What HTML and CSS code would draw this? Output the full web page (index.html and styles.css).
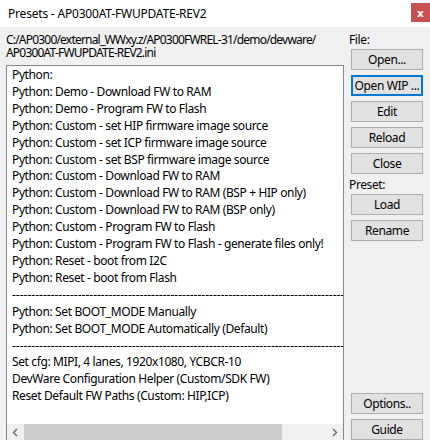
FILE: index.html
```html
<!DOCTYPE html>
<html lang="en">
<head>
    <meta charset="UTF-8">
    <title>Presets</title>
    <link rel="stylesheet" href="styles.css">
</head>
<body>
    <div class="window">
        <div class="titlebar">
            <span class="title">Presets - AP0300AT-FWUPDATE-REV2</span>
            <span class="close-x">x</span>
        </div>
        <div class="client">
            <div class="left">
                <div class="path">C:/AP0300/external_WWxy.z/AP0300FWREL-31/demo/devware/<br>AP0300AT-FWUPDATE-REV2.ini</div>
                <div class="listbox">
                    <div class="items">
                        <div class="item">Python:</div>
                        <div class="item">Python: Demo - Download FW to RAM</div>
                        <div class="item">Python: Demo - Program FW to Flash</div>
                        <div class="item">Python: Custom - set HIP firmware image source</div>
                        <div class="item">Python: Custom - set ICP firmware image source</div>
                        <div class="item">Python: Custom - set BSP firmware image source</div>
                        <div class="item">Python: Custom - Download FW to RAM</div>
                        <div class="item">Python: Custom - Download FW to RAM (BSP + HIP only)</div>
                        <div class="item">Python: Custom - Download FW to RAM (BSP only)</div>
                        <div class="item">Python: Custom - Program FW to Flash</div>
                        <div class="item">Python: Custom - Program FW to Flash - generate files only!</div>
                        <div class="item">Python: Reset - boot from I2C</div>
                        <div class="item">Python: Reset - boot from Flash</div>
                        <div class="item sep">----------------------------------------------------------------------------------------</div>
                        <div class="item">Python: Set BOOT_MODE Manually</div>
                        <div class="item">Python: Set BOOT_MODE Automatically (Default)</div>
                        <div class="item sep">----------------------------------------------------------------------------------------</div>
                        <div class="item">Set cfg: MIPI, 4 lanes, 1920x1080, YCBCR-10</div>
                        <div class="item">DevWare Configuration Helper (Custom/SDK FW)</div>
                        <div class="item">Reset Default FW Paths (Custom: HIP,ICP)</div>
                    </div>
                    <div class="hscroll">
                        <span class="arrow">
                            <svg width="7" height="9" viewBox="0 0 7 9"><path d="M5 1 L1.5 4.5 L5 8" fill="none" stroke="#606060" stroke-width="1.3"/></svg>
                        </span>
                        <span class="thumb"></span>
                        <span class="track"></span>
                        <span class="arrow">
                            <svg width="7" height="9" viewBox="0 0 7 9"><path d="M2 1 L5.5 4.5 L2 8" fill="none" stroke="#606060" stroke-width="1.3"/></svg>
                        </span>
                    </div>
                </div>
            </div>
            <div class="right">
                <div class="label">File:</div>
                <div class="btn first">Open...</div>
                <div class="btn focused">Open WIP ...</div>
                <div class="btn">Edit</div>
                <div class="btn">Reload</div>
                <div class="btn">Close</div>
                <div class="label preset">Preset:</div>
                <div class="btn first">Load</div>
                <div class="btn">Rename</div>
                <div class="btn bottom">Options..</div>
                <div class="btn">Guide</div>
            </div>
        </div>
    </div>
</body>
</html>
```

FILE: styles.css
```css
body {
    margin: 0;
    font-family: "Noto Sans", Arial, sans-serif;
    font-size: 12px;
    letter-spacing: -0.38px;
    color: #000;
    background: #f0f0f0;
}
.window {
    width: 430px;
    height: 440px;
    overflow: hidden;
    background: #f0f0f0;
}
.titlebar {
    height: 27px;
    background: #fff;
    display: flex;
    align-items: center;
    padding-left: 8px;
}
.title {
    letter-spacing: -0.2px;
}
.close-x {
    margin-left: auto;
    align-self: flex-start;
    margin-top: 3px;
    width: 19px;
    height: 19px;
    background: #c75050;
    color: #fff;
    font-weight: bold;
    font-size: 11px;
    letter-spacing: 0;
    display: flex;
    align-items: center;
    justify-content: center;
}
.client {
    height: 407px;
    display: flex;
    padding-top: 6px;
}
.left {
    width: 338px;
    padding-left: 6px;
}
.path {
    height: 26px;
    line-height: 13px;
    letter-spacing: -0.8px;
    white-space: nowrap;
}
.listbox {
    margin-top: 6px;
    height: 375px;
    background: #fff;
    border: 1px solid #828790;
    border-bottom: none;
    box-sizing: border-box;
}
.items {
    height: 358px;
    overflow: hidden;
    padding: 1px 0 0 5px;
    box-sizing: border-box;
}
.item {
    line-height: 16.9px;
    white-space: nowrap;
}
.sep {
    letter-spacing: 0;
}
.hscroll {
    height: 17px;
    display: flex;
    background: #f0f0f0;
}
.arrow {
    width: 17px;
    display: flex;
    align-items: center;
    justify-content: center;
}
.thumb {
    width: 258px;
    background: #cdcdcd;
}
.track {
    flex: 1;
}
.right {
    width: 79px;
    padding-left: 7px;
    display: flex;
    flex-direction: column;
}
.label {
    line-height: 13px;
    margin-left: -2px;
}
.preset {
    margin-top: 4px;
}
.btn {
    width: 70px;
    height: 19px;
    flex: none;
    margin-top: 5px;
    background: #e1e1e1;
    border: 1px solid #adadad;
    display: flex;
    align-items: center;
    justify-content: center;
    white-space: nowrap;
}
.btn.first {
    margin-top: 3px;
}
.btn.focused {
    border-color: #0078d7;
    box-shadow: inset 0 0 0 1px #0078d7;
}
.btn.bottom {
    margin-top: auto;
}
```
